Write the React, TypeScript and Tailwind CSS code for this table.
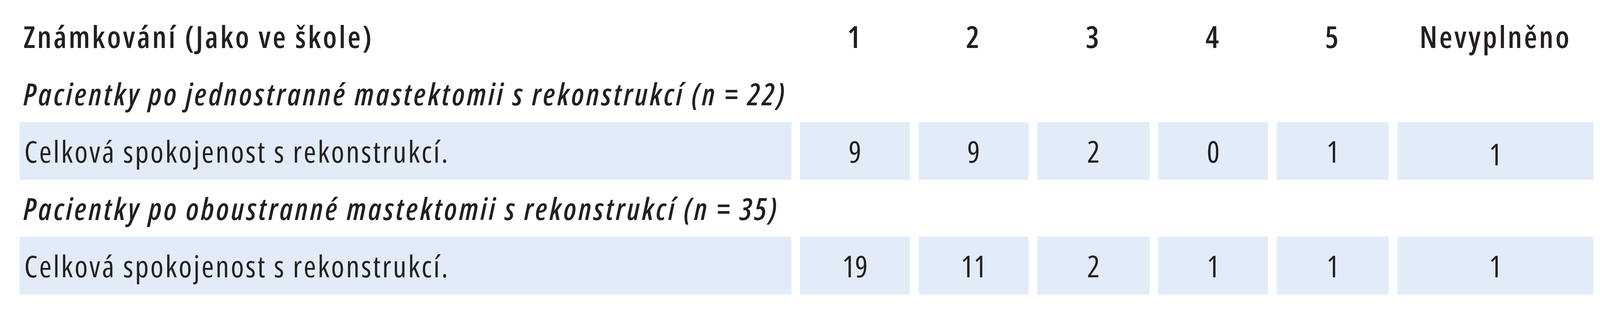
import React from 'react';

const cols = ['1', '2', '3', '4', '5', 'Nevyplněno'];

const groups = [
  {
    title: 'Pacientky po jednostranné mastektomii s rekonstrukcí (n = 22)',
    label: 'Celková spokojenost s rekonstrukcí.',
    values: ['9', '9', '2', '0', '1', '1'],
    lastLow: true,
  },
  {
    title: 'Pacientky po oboustranné mastektomii s rekonstrukcí (n = 35)',
    label: 'Celková spokojenost s rekonstrukcí.',
    values: ['19', '11', '2', '1', '1', '1'],
    lastLow: false,
  },
];

export default function App() {
  return (
    <div className="w-full h-[800px] bg-white text-[#231f20] font-['Open_Sans',sans-serif] font-stretch-semi-condensed text-[77px] leading-none">
      <div className="pt-[20px] pl-[1.22%] pr-[0.42%]">
        <div className="grid grid-cols-[minmax(0,2291fr)_minmax(0,326fr)_minmax(0,326fr)_minmax(0,333fr)_minmax(0,326fr)_minmax(0,332fr)_minmax(0,581fr)] gap-x-[0.56%]">
          {/* Header */}
          <div className="h-[147px] flex items-center pl-[10px] font-semibold tracking-[0.066em] whitespace-nowrap">
            Známkování (Jako ve škole)
          </div>
          {cols.map((c) => (
            <div key={c} className="h-[147px] flex items-center justify-center font-semibold tracking-[0.066em] whitespace-nowrap">
              {c}
            </div>
          ))}

          {groups.map((g) => (
            <React.Fragment key={g.title}>
              <div className="col-span-7 h-[146px] flex items-center pl-[10px] font-semibold italic tracking-[0.074em] whitespace-nowrap">
                {g.title}
              </div>
              <div className="h-[148px] bg-[#e1ecf8] flex items-center pl-[12px] tracking-[0.055em] whitespace-nowrap">
                {g.label}
              </div>
              {g.values.map((v, i) => (
                <div
                  key={i}
                  className={`h-[148px] bg-[#e1ecf8] flex items-center justify-center ${
                    g.lastLow && i === 5 ? 'pt-[14px]' : ''
                  }`}
                >
                  {v}
                </div>
              ))}
            </React.Fragment>
          ))}
        </div>
      </div>
    </div>
  );
}
